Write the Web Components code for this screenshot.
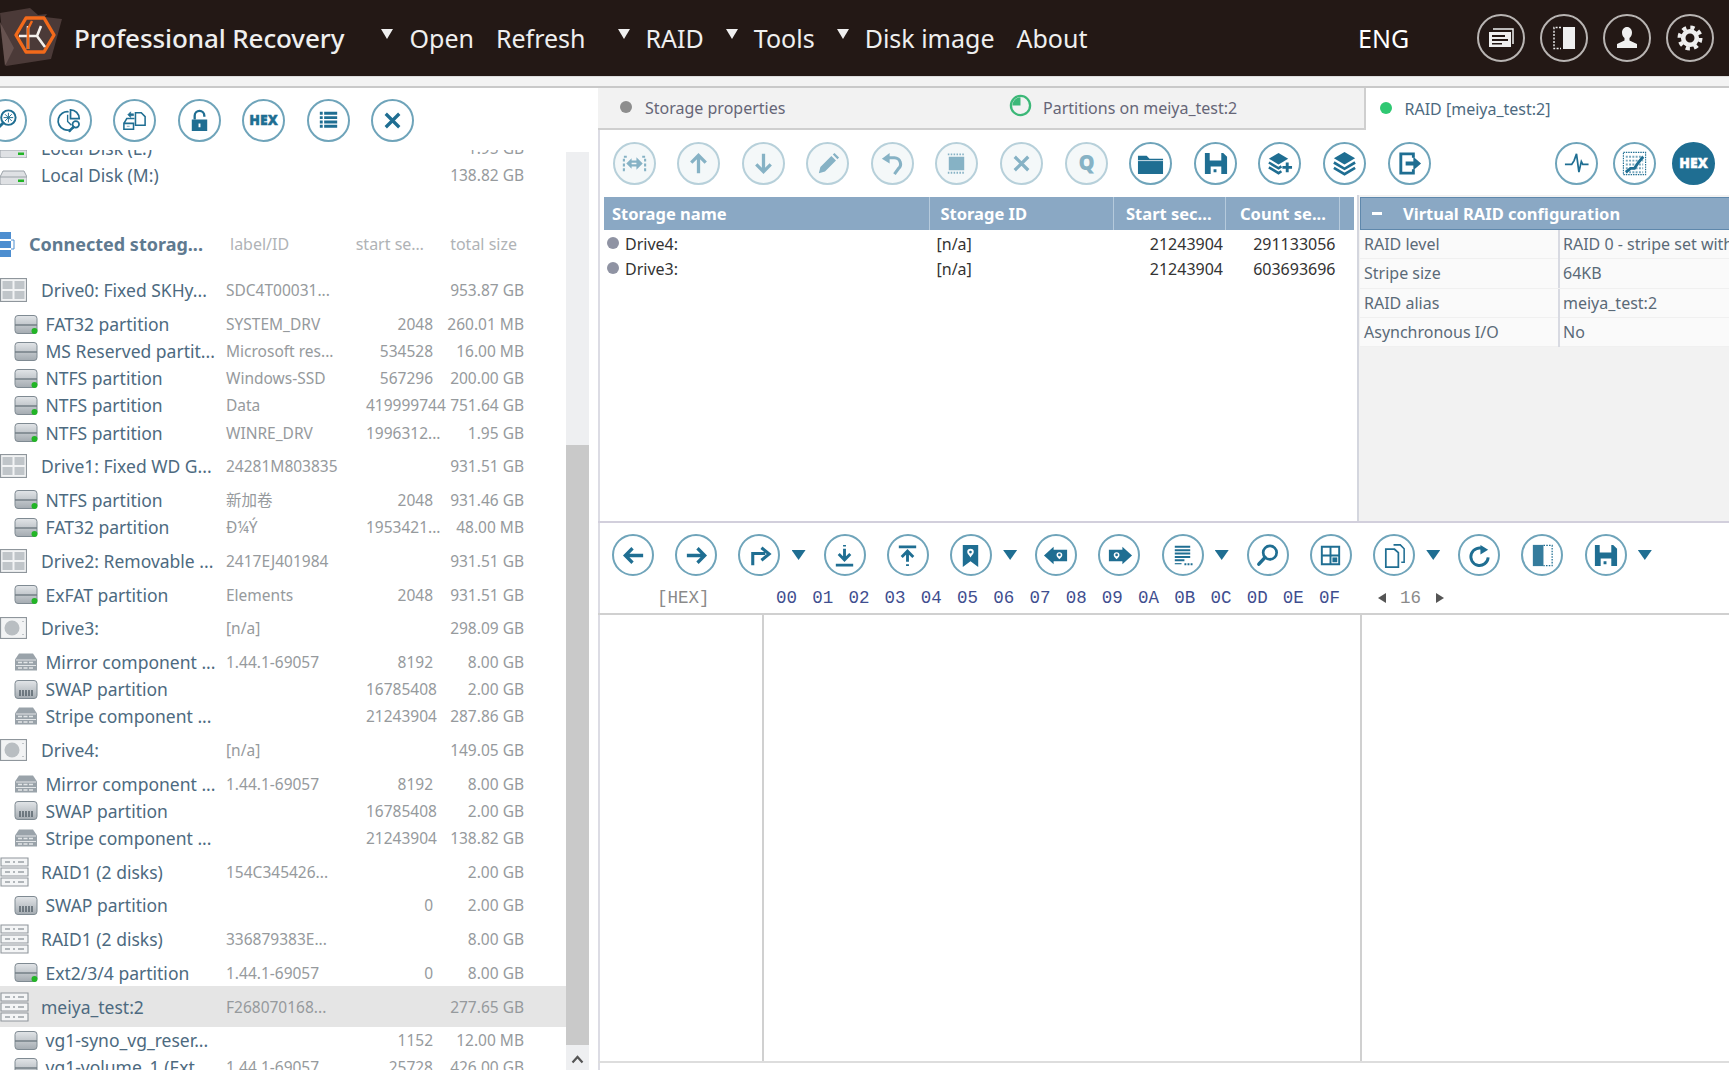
<!DOCTYPE html>
<html>
<head>
<meta charset="utf-8">
<title>Professional Recovery</title>
<style>
    html, body { margin: 0; padding: 0; }
    body {
        width: 1729px;
        height: 1070px;
        overflow: hidden;
        background: #fff;
        font-family: "Noto Sans", "Noto Sans CJK SC", sans-serif;
    }
</style>
</head>
<body>
<app-shell>
    <app-header slot="header">
        <nav-item caret>Open</nav-item>
        <nav-item>Refresh</nav-item>
        <nav-item caret>RAID</nav-item>
        <nav-item caret>Tools</nav-item>
        <nav-item caret>Disk image</nav-item>
        <nav-item>About</nav-item>
    </app-header>

    <tree-panel slot="left">
        <round-btn slot="tools" icon="scan"></round-btn>
        <round-btn slot="tools" icon="piesearch"></round-btn>
        <round-btn slot="tools" icon="diskfile"></round-btn>
        <round-btn slot="tools" icon="lock"></round-btn>
        <round-btn slot="tools" icon="hex"></round-btn>
        <round-btn slot="tools" icon="list"></round-btn>
        <round-btn slot="tools" icon="x"></round-btn>

        <tree-row compact icon="local" start="" size="1.95 GB" style="margin-top:-15.5px">Local Disk (L:)</tree-row>
        <tree-row compact icon="local" size="138.82 GB" style="margin-bottom:35.5px">Local Disk (M:)</tree-row>
        <tree-head style="margin-bottom:6px">Connected storag...</tree-head>

        <tree-row icon="drive" tag="SDC4T00031..." size="953.87 GB">Drive0: Fixed SKHy...</tree-row>
        <tree-row child icon="part" tag="SYSTEM_DRV" start="2048" size="260.01 MB">FAT32 partition</tree-row>
        <tree-row child icon="plain" tag="Microsoft res..." start="534528" size="16.00 MB">MS Reserved partit...</tree-row>
        <tree-row child icon="part" tag="Windows-SSD" start="567296" size="200.00 GB">NTFS partition</tree-row>
        <tree-row child icon="part" tag="Data" start="419999744" size="751.64 GB">NTFS partition</tree-row>
        <tree-row child icon="part" tag="WINRE_DRV" start="1996312..." size="1.95 GB">NTFS partition</tree-row>
        <tree-row icon="drive" tag="24281M803835" size="931.51 GB">Drive1: Fixed WD G...</tree-row>
        <tree-row child icon="part" tag="新加卷" start="2048" size="931.46 GB">NTFS partition</tree-row>
        <tree-row child icon="part" tag="Ð¼Ý" start="1953421..." size="48.00 MB">FAT32 partition</tree-row>
        <tree-row icon="drive" tag="2417EJ401984" size="931.51 GB">Drive2: Removable ...</tree-row>
        <tree-row child icon="part" tag="Elements" start="2048" size="931.51 GB">ExFAT partition</tree-row>
        <tree-row icon="hdd" tag="[n/a]" size="298.09 GB">Drive3:</tree-row>
        <tree-row child icon="comp" tag="1.44.1-69057" start="8192" size="8.00 GB">Mirror component ...</tree-row>
        <tree-row child icon="swap" start="16785408" size="2.00 GB">SWAP partition</tree-row>
        <tree-row child icon="comp" start="21243904" size="287.86 GB">Stripe component ...</tree-row>
        <tree-row icon="hdd" tag="[n/a]" size="149.05 GB">Drive4:</tree-row>
        <tree-row child icon="comp" tag="1.44.1-69057" start="8192" size="8.00 GB">Mirror component ...</tree-row>
        <tree-row child icon="swap" start="16785408" size="2.00 GB">SWAP partition</tree-row>
        <tree-row child icon="comp" start="21243904" size="138.82 GB">Stripe component ...</tree-row>
        <tree-row icon="raid" tag="154C345426..." size="2.00 GB">RAID1 (2 disks)</tree-row>
        <tree-row child icon="swap" start="0" size="2.00 GB">SWAP partition</tree-row>
        <tree-row icon="raid" tag="336879383E..." size="8.00 GB">RAID1 (2 disks)</tree-row>
        <tree-row child icon="part" tag="1.44.1-69057" start="0" size="8.00 GB">Ext2/3/4 partition</tree-row>
        <tree-row selected icon="raid" tag="F268070168..." size="277.65 GB">meiya_test:2</tree-row>
        <tree-row child icon="plain" start="1152" size="12.00 MB">vg1-syno_vg_reser...</tree-row>
        <tree-row child icon="part" tag="1.44.1-69057" start="25728" size="426.00 GB">vg1-volume_1 (Ext...</tree-row>
    </tree-panel>

    <main-panel slot="right">
        <tab-strip slot="tabs"></tab-strip>
        <round-btn slot="tools-a" kind="off" icon="dashed"></round-btn>
        <round-btn slot="tools-a" kind="off" icon="up"></round-btn>
        <round-btn slot="tools-a" kind="off" icon="down"></round-btn>
        <round-btn slot="tools-a" kind="off" icon="pencil"></round-btn>
        <round-btn slot="tools-a" kind="off" icon="undo"></round-btn>
        <round-btn slot="tools-a" kind="off" icon="chip"></round-btn>
        <round-btn slot="tools-a" kind="off" icon="x"></round-btn>
        <round-btn slot="tools-a" kind="off" icon="q"></round-btn>
        <round-btn slot="tools-a" icon="folder"></round-btn>
        <round-btn slot="tools-a" icon="save"></round-btn>
        <round-btn slot="tools-a" icon="layersplus"></round-btn>
        <round-btn slot="tools-a" icon="layers"></round-btn>
        <round-btn slot="tools-a" icon="export"></round-btn>
        <round-btn slot="tools-b" icon="pulse"></round-btn>
        <round-btn slot="tools-b" icon="heat"></round-btn>
        <round-btn slot="tools-b" kind="on" icon="hex"></round-btn>
        <round-btn slot="tools-b" icon="table"></round-btn>

        <raid-table slot="table"></raid-table>
        <prop-panel slot="props"></prop-panel>

        <hex-view slot="hex"></hex-view>
    </main-panel>
</app-shell>

<script>
    // all icons drawn on a 28x28 box, currentColor
    const ICONS = {
        scan: '<circle cx="17" cy="11" r="7.5" fill="none" stroke="currentColor" stroke-width="2"/><path d="M11.5 16.5L4 24" stroke="currentColor" stroke-width="3" stroke-linecap="round"/><path d="M17 6v10M12 11h10M13.5 7.5l7 7M20.5 7.5l-7 7" stroke="currentColor" stroke-width="1"/>',
        piesearch: '<path d="M12 5a9.5 9.5 0 1 0 7 14" fill="none" stroke="currentColor" stroke-width="1.8"/><path d="M14 3a9 9 0 0 1 9 9h-9z" fill="none" stroke="currentColor" stroke-width="1.8"/><path d="M11 8v7l4 4" fill="none" stroke="currentColor" stroke-width="1.4"/><circle cx="19.5" cy="18" r="3.4" fill="#fff" stroke="currentColor" stroke-width="1.8"/><path d="M17 20.5L13 25" stroke="currentColor" stroke-width="2.4" stroke-linecap="round"/>',
        diskfile: '<path d="M15 6h6l4 4v9H15z" fill="none" stroke="currentColor" stroke-width="1.6"/><path d="M3 17h10v6H3zM3 17l3-5h8" fill="none" stroke="currentColor" stroke-width="1.6"/><path d="M7 8l3-3v2h3v2h-3v2zM6 20h3" fill="currentColor" stroke="currentColor" stroke-width=".6"/>',
        lock: '<path d="M9 13V9a5 5 0 0 1 10 0v1" fill="none" stroke="currentColor" stroke-width="2.4"/><path fill-rule="evenodd" d="M6 13h16v12H6zM13 17v4h2v-4z" fill="currentColor"/>',
        hex: '<text x="14" y="19" text-anchor="middle" font-family="Noto Sans, sans-serif" font-weight="900" font-size="14.5" fill="currentColor" stroke="currentColor" stroke-width=".4">HEX</text>',
        list: '<path d="M5 6.5h3M5 11h3M5 15.5h3M5 20h3" stroke="currentColor" stroke-width="3"/><path d="M9.5 6.5H23M9.5 11H23M9.5 15.5H23M9.5 20H23" stroke="currentColor" stroke-width="3"/>',
        x: '<path d="M7 7l14 14M21 7L7 21" stroke="currentColor" stroke-width="3.4" fill="none"/>',
        dashed: '<path d="M6 7H3v14h3M22 7h3v14h-3" fill="none" stroke="currentColor" stroke-width="2.2" stroke-dasharray="3 2"/><path d="M10 12h8M10 16h8" stroke="currentColor" stroke-width="2.2"/><path d="M16 7.5l6.5 6.5-6.5 6.5zM11 8.5L5.5 14l5.5 5.5z" fill="currentColor"/>',
        up: '<path d="M14 24V6M6.5 13L14 5.5l7.5 7.5" fill="none" stroke="currentColor" stroke-width="3.4"/>',
        down: '<path d="M14 4v18M6.5 15l7.5 7.5 7.5-7.5" fill="none" stroke="currentColor" stroke-width="3.4"/>',
        pencil: '<path d="M5 24l1.6-6.4L18 6.2l4.8 4.8L11.4 22.4zM19.5 4.7l1.7-1.7 4.8 4.8-1.7 1.7z" fill="currentColor"/>',
        undo: '<path d="M10 8h6a6.5 6.5 0 0 1 4 11.5L16 25" fill="none" stroke="currentColor" stroke-width="3.2"/><path d="M3 9l8-6v11z" fill="currentColor"/>',
        chip: '<rect x="6" y="7" width="16" height="14" fill="currentColor"/><path d="M5 4.5h18M5 23.5h18" stroke="currentColor" stroke-width="2" stroke-dasharray="1.6 1.4"/>',
        q: '<text x="14" y="21" text-anchor="middle" font-family="Noto Sans, sans-serif" font-weight="900" font-size="21" fill="currentColor">Q</text>',
        folder: '<path d="M1 6h9l3 3h14v16H1z" fill="currentColor"/><path d="M1 11h26" stroke="#fff" stroke-width=".8"/>',
        save: '<path fill-rule="evenodd" d="M3 3h19l4 4v18H3zM8 3v8h12V3zM9 17v8h11v-8zM12 20h3v3h-3z" fill="currentColor"/>',
        layersplus: '<path d="M13 3l10 6-10 6-10-6z" fill="currentColor"/><path d="M3 13l10 6 3-2M3 18l10 6 3-2" fill="none" stroke="currentColor" stroke-width="2.6"/><path d="M22 13v10M17 18h10" stroke="currentColor" stroke-width="3"/>',
        layers: '<path d="M14 2l11 6.5L14 15 3 8.5z" fill="currentColor"/><path d="M3 13l11 6.5L25 13M3 18.5L14 25l11-6.5" fill="none" stroke="currentColor" stroke-width="2.8"/>',
        export: '<path d="M18 8V4H5v20h13v-4" fill="none" stroke="currentColor" stroke-width="3"/><path d="M10 12h8V7l8 7-8 7v-5h-8z" fill="currentColor"/>',
        pulse: '<path d="M2 15h7l2.5-4 2.5-7 2.5 19 2.5-11 1.5 3h6" fill="none" stroke="currentColor" stroke-width="1.8"/>',
        heat: '<rect x="2.5" y="2.5" width="23" height="23" fill="none" stroke="currentColor" stroke-width="1.2" stroke-dasharray="1.5 1"/><path d="M5 7h18M5 11h18M5 15h18M5 19h18M5 23h18" stroke="currentColor" stroke-width="2" stroke-dasharray="2 1.4" opacity=".6"/><path d="M5 23l5-4 4 0 4-6 5-6" stroke="currentColor" stroke-width="3" fill="none"/>',
        table: '<rect x="4" y="3" width="20" height="22" fill="none" stroke="currentColor" stroke-width="2"/><path d="M4 11h20M14 3v8" stroke="currentColor" stroke-width="2"/><path d="M7 15h14v7H7z" fill="currentColor"/>',
        back: '<path d="M24 14H6M13 6.5L5.5 14l7.5 7.5" fill="none" stroke="currentColor" stroke-width="3.4"/>',
        forward: '<path d="M4 14h18M15 6.5l7.5 7.5-7.5 7.5" fill="none" stroke="currentColor" stroke-width="3.4"/>',
        jump: '<path d="M7 24V12h13" fill="none" stroke="currentColor" stroke-width="3.2"/><path d="M16 6l8 6.5-8 6.5" fill="none" stroke="currentColor" stroke-width="3.2"/>',
        godown: '<path d="M14 3v1.6M14 7v11M8 12.5l6 6 6-6M5 24h18" fill="none" stroke="currentColor" stroke-width="3"/>',
        goup: '<path d="M5 5h18M14 10v10.5M8 15.5l6-6 6 6M14 23v2" fill="none" stroke="currentColor" stroke-width="3"/>',
        mark: '<path fill-rule="evenodd" d="M6 3h16v23l-8-6-8 6zM14 7a3.4 3.4 0 0 0-3.4 3.4c0 2 1.9 3.2 3.4 5.6 1.500-2.400 3.400-3.600 3.400-5.600A3.400 3.400 0 0 0 14 7zM14 9a1.400 1.400 0 1 1 0 2.800A1.400 1.400 0 0 1 14 9z" fill="currentColor"/>',
        markprev: '<path fill-rule="evenodd" d="M1 14l10-9v3h14v12H11v3zM17 10.500a3 3 0 0 0-3 3c0 1.700 1.700 2.700 3 4.500 1.300-1.800 3-2.800 3-4.500a3 3 0 0 0-3-3zM17 12a1.400 1.400 0 1 1 0 2.800A1.400 1.400 0 0 1 17 12z" fill="currentColor"/>',
        marknext: '<path fill-rule="evenodd" d="M27 14l-10-9v3H3v12h14v3zM11 10.500a3 3 0 0 0-3 3c0 1.700 1.700 2.700 3 4.500 1.300-1.800 3-2.800 3-4.500a3 3 0 0 0-3-3zM11 12a1.400 1.400 0 1 1 0 2.800A1.400 1.400 0 0 1 11 12z" fill="currentColor"/>',
        listdots: '<path d="M6 5h16M6 8.500h16M6 12h16M6 15.500h16M6 19h10" stroke="currentColor" stroke-width="2.100"/><path d="M16 23h9" stroke="currentColor" stroke-width="2" stroke-dasharray="2 1.200"/><path d="M6 22.500h7" stroke="currentColor" stroke-width="1.200"/>',
        search: '<circle cx="16.500" cy="11" r="7" fill="none" stroke="currentColor" stroke-width="2.800"/><path d="M11.500 16L5 23" stroke="currentColor" stroke-width="3.600" stroke-linecap="round"/>',
        grid: '<path d="M5 5h18v18H5zM14 5v18M5 14h18" fill="none" stroke="currentColor" stroke-width="2"/><rect x="16" y="16" width="5" height="5" fill="currentColor"/>',
        copy: '<path d="M13 3h7l4 4v14h-3" fill="none" stroke="currentColor" stroke-width="1.600"/><path d="M5 7.500h9l4 3.500v15H5z" fill="none" stroke="currentColor" stroke-width="1.800"/>',
        redo: '<path d="M18.500 7.500A9 9 0 1 0 23 16" fill="none" stroke="currentColor" stroke-width="3"/><path d="M15 3l8 5-8 5z" fill="currentColor"/>',
        half: '<rect x="4" y="3" width="11" height="22" fill="currentColor" opacity=".9"/><path d="M15 3.500h9v21h-9" fill="none" stroke="currentColor" stroke-width="1.300" stroke-dasharray="1.600 1.300"/>',
        cards: '<path d="M6 5h20v15" fill="none" stroke="currentColor" stroke-width="1.500"/><path fill-rule="evenodd" d="M2 8h22v15H2zM5 11v2h13v-2zM5 15v2h16v-2zM5 19v1.500h10V19z" fill="currentColor"/>',
        panel: '<rect x="13" y="3" width="12" height="22" fill="currentColor"/><path d="M11 3.500H4v21h7" fill="none" stroke="currentColor" stroke-width="1.400" stroke-dasharray="2 1.400"/>',
        user: '<path d="M14 3c-3 0-5 2.500-5 5.500 0 2.500 1 4.500 2.500 5.500v2.500L4 20v4h20v-4l-7.500-3.500V14c1.500-1 2.500-3 2.500-5.500C19 5.500 17 3 14 3z" fill="currentColor"/>',
        gear: '<circle cx="14" cy="14" r="6.800" fill="none" stroke="currentColor" stroke-width="4.600"/><circle cx="14" cy="14" r="10.500" fill="none" stroke="currentColor" stroke-width="4" stroke-dasharray="4.200 4.050"/>'
    };

    // little drive pictures of the tree, by kind
    const GREY_DEFS = '<defs><linearGradient id="g" x1="0" y1="0" x2="0" y2="1"><stop offset="0" stop-color="#e2e5e8"/><stop offset="1" stop-color="#a4abb1"/></linearGradient></defs>';
    const LED = '<circle cx="20.500" cy="17" r="3" fill="#22b526"/>';
    const TREE_ICONS = {
        local: GREY_DEFS + '<path d="M3 6h21l3 6v6a2 2 0 0 1-2 2H2a2 2 0 0 1-2-2v-6z" fill="#dfe1e4" stroke="#9ba2a8"/><path d="M0 12h27" stroke="#9ba2a8"/><rect x="18" y="14.500" width="6" height="2.500" fill="#22b526"/>',
        part: GREY_DEFS + '<path d="M4 1.500h16a3 3 0 0 1 3 3v12a3 3 0 0 1-3 3H4a3 3 0 0 1-3-3v-12a3 3 0 0 1 3-3z" fill="url(#g)" stroke="#7f8a92"/><path d="M1 11h22" stroke="#6f7a82" stroke-width="1.400"/>' + LED,
        plain: GREY_DEFS + '<path d="M4 1.500h16a3 3 0 0 1 3 3v12a3 3 0 0 1-3 3H4a3 3 0 0 1-3-3v-12a3 3 0 0 1 3-3z" fill="url(#g)" stroke="#7f8a92"/><path d="M1 11h22" stroke="#6f7a82" stroke-width="1.400"/>',
        swap: GREY_DEFS + '<path d="M4 1.500h16a3 3 0 0 1 3 3v12a3 3 0 0 1-3 3H4a3 3 0 0 1-3-3v-12a3 3 0 0 1 3-3z" fill="url(#g)" stroke="#7f8a92"/><path d="M6 11v6M9 11v6M12 11v6M15 11v6M18 11v6" stroke="#5d6870" stroke-width="1.600"/>',
        comp: '<path d="M5 1.500h14l4 6v11H1v-11z" fill="#9aa3aa"/><path d="M2 8h20M2 13.500h20" stroke="#e3e6e8" stroke-width="1.200"/><path d="M4 10.500h16M4 16h16" stroke="#e3e6e8" stroke-width="1.400" stroke-dasharray="4 1.500"/>',
        drive: '<rect x=".5" y=".5" width="26" height="23" fill="#f2f3f4" stroke="#8f969c" stroke-width="1.200"/><rect x="2.500" y="3" width="10" height="8" fill="#c0c5c9"/><rect x="14.500" y="3" width="10" height="8" fill="#c0c5c9"/><rect x="2.500" y="13" width="10" height="8" fill="#c0c5c9"/><rect x="14.500" y="13" width="10" height="8" fill="#c0c5c9"/>',
        hdd: '<rect x=".5" y=".5" width="26" height="21" fill="#f2f3f4" stroke="#8f969c" stroke-width="1.200"/><circle cx="12" cy="11" r="7.500" fill="#b9bec2"/><path d="M23 4v1M23 17v1" stroke="#8f969c"/>',
        raid: '<path d="M1 1h27v8H1zM1 11h27v8H1zM1 21h27v8H1z" fill="#f4f5f6" stroke="#8f969c" stroke-width="1.100"/><path d="M5 5h5M13 5h2M18 5h6M5 15h5M13 15h2M18 15h6M5 25h5M13 25h2M18 25h6" stroke="#9aa1a7" stroke-width="1.600"/>'
    };
    const TREE_BOX = { local: [27, 20], part: [25, 21], plain: [25, 21], swap: [25, 21], comp: [24, 20], drive: [27, 24], hdd: [27, 22], raid: [29, 30] };

    class AppShell extends HTMLElement {
        constructor() {
            super();
            this.attachShadow({ mode: "open" }).innerHTML = `
                <style>
                    :host { display: grid; grid-template-rows: 76px 12px 1fr; width: 1729px; height: 1070px; overflow: hidden; }
                    .strip { background: #f3f3f3; border-top: 1px solid #ddd; border-bottom: 2px solid #c9c9c9; box-sizing: border-box; }
                    .body { display: grid; grid-template-columns: 598px 1fr; min-height: 0; }
                </style>
                <slot name="header"></slot>
                <div class="strip"></div>
                <div class="body">
                    <slot name="left"></slot>
                    <slot name="right"></slot>
                </div>
            `;
        }
    }

    class AppHeader extends HTMLElement {
        constructor() {
            super();
            this.attachShadow({ mode: "open" }).innerHTML = `
                <style>
                    :host { display: flex; align-items: center; height: 76px; background: #231815; color: #efefef; overflow: hidden; }
                    .logo { flex: none; width: 62px; height: 76px; margin-right: 12px; }
                    .title { width: 318px; font-size: 26px; font-weight: 500; letter-spacing: -.1px; white-space: nowrap; }
                    nav { display: flex; width: 1010px; align-items: center; gap: 0; }
                    .lang { font-size: 25px; width: 123px; white-space: nowrap; color: #fff; }
                    .ic { flex: none; box-sizing: border-box; width: 48px; height: 48px; margin-right: 15px; border: 2px solid #b8b4b2; border-radius: 50%; display: flex; align-items: center; justify-content: center; color: #efefef; }
                    svg.i { width: 28px; height: 28px; }
                </style>
                <svg class="logo" viewBox="0 0 62 76">
                    <path d="M0 13L30 8l8 7 9-1-2 3 17 2-11 40L6 66z" fill="#4b3a38"/>
                    <path d="M0 22l5 44 9-18z" fill="#66524f"/>
                    <path d="M26 18h18l10 17-10 17H26L16 35z" fill="none" stroke="#f26a1b" stroke-width="3.400" stroke-linejoin="round"/>
                    <path d="M19 36h11M41 26l-4 10 8 11M28 26v23M28 36h8" fill="none" stroke="#f4f0ec" stroke-width="2.600"/>
                    <path d="M32 21l-4 8v20" fill="none" stroke="#f26a1b" stroke-width="2.400"/>
                </svg>
                <div class="title">Professional Recovery</div>
                <nav><slot></slot></nav>
                <div class="lang">ENG</div>
                <div class="ic"><svg class="i" viewBox="0 0 28 28">${ICONS.cards}</svg></div>
                <div class="ic"><svg class="i" viewBox="0 0 28 28">${ICONS.panel}</svg></div>
                <div class="ic"><svg class="i" viewBox="0 0 28 28">${ICONS.user}</svg></div>
                <div class="ic"><svg class="i" viewBox="0 0 28 28">${ICONS.gear}</svg></div>
            `;
        }
    }

    class NavItem extends HTMLElement {
        constructor() {
            super();
            const caret = this.hasAttribute("caret");
            this.attachShadow({ mode: "open" }).innerHTML = `
                <style>
                    :host { display: flex; align-items: center; font-size: 25px; white-space: nowrap; margin-right: 32px; }
                    :host([caret]) { margin-right: 22px; }
                    i { width: 0; height: 0; margin: -8px 16px 0 0; border: 6px solid transparent; border-top: 10px solid #efefef; border-bottom: 0; }
                </style>
                ${caret ? "<i></i>" : ""}<slot></slot>
            `;
        }
    }

    class RoundBtn extends HTMLElement {
        constructor() {
            super();
            this.attachShadow({ mode: "open" }).innerHTML = `
                <style>
                    :host { display: flex; flex: none; box-sizing: border-box; width: var(--btn, 43px); height: var(--btn, 43px); border: 2px solid #6fa4ba; border-radius: 50%; align-items: center; justify-content: center; color: #1f6e92; background: #fff; }
                    :host([kind="off"]) { border-color: #b7d0da; color: #86b2c5; background: #f4f8f9; }
                    :host([kind="on"]) { background: #1f6e92; border-color: #1f6e92; color: #fff; }
                    svg { width: 27px; height: 27px; overflow: visible; }
                </style>
                <svg viewBox="0 0 28 28">${ICONS[this.getAttribute("icon")] || ""}</svg>
            `;
        }
    }

    class TreePanel extends HTMLElement {
        constructor() {
            super();
            this.attachShadow({ mode: "open" }).innerHTML = `
                <style>
                    :host { display: grid; grid-template-rows: 62px 1fr; grid-template-columns: 566px 23px 9px; height: 982px; overflow: hidden; border-right: 2px solid #dcdce4; box-sizing: border-box; width: 600px; }
                    .tools { grid-column: 1 / -1; display: flex; align-items: center; gap: 21.5px; margin-left: -16px; padding-top: 2px; }
                    .list { overflow: hidden; min-height: 0; }
                    .bar { display: flex; flex-direction: column; background: #eeeff1; margin-top: 2px; }
                    .gap { height: 293px; flex: none; }
                    .thumb { height: 600px; flex: none; background: #c9c9c9; }
                    .arrow { flex: 1; display: flex; justify-content: center; padding-top: 9px; }
                    .arrow svg { width: 13px; height: 10px; }
                </style>
                <div class="tools"><slot name="tools"></slot></div>
                <div class="list"><slot></slot></div>
                <div class="bar">
                    <div class="gap"></div><div class="thumb"></div>
                    <div class="arrow"><svg viewBox="0 0 13 10"><path d="M1.500 8.500L6.500 3l5 5.500" fill="none" stroke="#555" stroke-width="2.200"/></svg></div>
                </div>
            `;
        }
    }

    const TREE_COLS = "226px 140px 67px 91px";

    class TreeHead extends HTMLElement {
        constructor() {
            super();
            this.attachShadow({ mode: "open" }).innerHTML = `
                <style>
                    :host { display: grid; grid-template-columns: ${TREE_COLS}; align-items: center; height: 40px; color: #b0b3b6; font-size: 16px; white-space: nowrap; }
                    .name { display: flex; align-items: center; font-size: 18px; font-weight: 700; color: #5f7a90; }
                    svg { width: 15px; height: 26px; margin-right: 14px; flex: none; }
                    .id { padding-left: 4px; }
                    .st { padding-left: 0; grid-column: 3; text-align: right; margin-left: -30px; margin-right: 9px; }
                    .sz { text-align: right; padding-right: 7px; }
                </style>
                <div class="name">
                    <svg viewBox="0 0 15 26"><path d="M0 1h11v7H0zM0 10h11v7H0zM0 19h11v7H0z" fill="#4d8ed0"/><path d="M11 9h3v9h-3" fill="none" stroke="#4d8ed0"/></svg>
                    <slot></slot>
                </div>
                <div class="id">label/ID</div>
                <div class="st">start se…</div>
                <div class="sz">total size</div>
            `;
        }
    }

    class TreeRow extends HTMLElement {
        constructor() {
            super();
            const kind = this.getAttribute("icon");
            const box = TREE_BOX[kind];
            this.attachShadow({ mode: "open" }).innerHTML = `
                <style>
                    :host { display: grid; grid-template-columns: ${TREE_COLS}; align-items: center; height: 40.400px; font-size: 15.500px; color: #969a9d; white-space: nowrap; }
                    :host([child]), :host([compact]) { height: 27.100px; }
                    :host([selected]) { background: #e5e5e5; }
                    .name { display: flex; align-items: center; font-size: 17.500px; color: #4d6a80; overflow: visible; }
                    .ico { flex: none; display: flex; width: 41px; }
                    :host([child]) .name { padding-left: 14px; }
                    :host([child]) .ico { width: 31.500px; }
                    .start, .size { text-align: right; }
                </style>
                <div class="name">
                    <span class="ico"><svg width="${box[0]}" height="${box[1]}" viewBox="0 0 ${box[0]} ${box[1]}">${TREE_ICONS[kind]}</svg></span>
                    <slot></slot>
                </div>
                <div>${this.getAttribute("tag") || ""}</div>
                <div class="start">${this.getAttribute("start") || ""}</div>
                <div class="size">${this.getAttribute("size") || ""}</div>
            `;
        }
    }

    class MainPanel extends HTMLElement {
        constructor() {
            super();
            this.attachShadow({ mode: "open" }).innerHTML = `
                <style>
                    :host { display: grid; grid-template-rows: 42px 67px 326px 1fr; height: 982px; min-width: 0; overflow: hidden; }
                    .tools { display: flex; align-items: center; padding-left: 14.500px; gap: 21.600px; }
                    .tools-b { display: flex; gap: 15.500px; margin-left: 102.500px; }
                    .upper { display: grid; grid-template-columns: 759px 1fr; padding-left: 0; border-bottom: 2px solid #d2cfdc; box-sizing: border-box; }
                </style>
                <slot name="tabs"></slot>
                <div class="tools"><slot name="tools-a"></slot><div class="tools-b"><slot name="tools-b"></slot></div></div>
                <div class="upper"><slot name="table"></slot><slot name="props"></slot></div>
                <slot name="hex"></slot>
            `;
        }
    }

    class TabStrip extends HTMLElement {
        constructor() {
            super();
            this.attachShadow({ mode: "open" }).innerHTML = `
                <style>
                    :host { display: grid; grid-template-columns: 364px 402.500px 1fr; font-size: 16px; color: #667; white-space: nowrap; }
                    .tab { display: flex; align-items: center; background: #f2f2f2; border-bottom: 2px solid #cfcfcf; box-sizing: border-box; padding-bottom: 1px; }
                    .active { background: #fff; border-bottom: 0; border-left: 2px solid #cfcfcf; color: #4d6a80; padding-left: 14px; margin-left: -1px; position: relative; }
                    .dot { width: 12px; height: 12px; border-radius: 50%; background: #8d8d8d; margin: -2px 13px 0 22px; flex: none; }
                    .active .dot { background: #2fc872; margin: -2px 13px 0 0; }
                    .part { width: 23px; height: 23px; flex: none; margin: -4px 11px 0 47px; }
                    .close { position: absolute; right: 0; top: 13px; width: 15px; height: 15px; }
                </style>
                <div class="tab"><i class="dot"></i>Storage properties</div>
                <div class="tab">
                    <svg class="part" viewBox="0 0 24 24"><circle cx="12" cy="12" r="10" fill="none" stroke="#3cb878" stroke-width="2.400"/><path d="M12 3.500v8.500h8.500A8.500 8.500 0 0 0 12 3.500z" fill="#3cb878" transform="rotate(-90 12 12)"/></svg>
                    Partitions on meiya_test:2
                </div>
                <div class="tab active"><i class="dot"></i>RAID [meiya_test:2]
                    <svg class="close" viewBox="0 0 15 15"><path d="M1 1l13 13M14 1L1 14" stroke="#777" stroke-width="2.200"/></svg>
                </div>
            `;
        }
    }

    class RaidTable extends HTMLElement {
        constructor() {
            super();
            this.attachShadow({ mode: "open" }).innerHTML = `
                <style>
                    :host { display: block; padding-left: 6px; font-size: 16px; color: #333; white-space: nowrap; }
                    .row { display: grid; grid-template-columns: 325.500px 184.500px 112px 113.500px 14px; width: 749.500px; }
                    .head { height: 33px; align-items: center; background: #8aa8c4; color: #fff; font-weight: 700; font-size: 16.500px; }
                    .head div { height: 33px; line-height: 33px; padding-left: 8px; box-sizing: border-box; border-right: 1px solid #b5cadc; }
                    .head div:nth-child(2) { padding-left: 11px; }
                    .head div:nth-child(3) { padding-left: 12px; }
                    .head div:nth-child(4) { padding-left: 14px; }
                    .head div:last-child { border: 0; }
                    .cell-row { height: 25px; line-height: 25px; }
                    .cell-row:first-of-type { margin-top: 1px; }
                    .first { margin-top: 2px; }
                    .name { display: flex; align-items: center; }
                    .dot { width: 12px; height: 12px; border-radius: 50%; background: #8f93a3; margin: -3px 6px 0 3px; }
                    .idc { padding-left: 7px; }
                    .num { text-align: right; padding-right: 3px; }
                    .num2 { text-align: right; padding-right: 4px; }
                </style>
                <div class="row head"><div>Storage name</div><div>Storage ID</div><div>Start sec...</div><div>Count se...</div><div></div></div>
                <div class="row cell-row first"><div class="name"><i class="dot"></i>Drive4:</div><div class="idc">[n/a]</div><div class="num">21243904</div><div class="num2">291133056</div></div>
                <div class="row cell-row"><div class="name"><i class="dot"></i>Drive3:</div><div class="idc">[n/a]</div><div class="num">21243904</div><div class="num2">603693696</div></div>
            `;
        }
    }

    class PropPanel extends HTMLElement {
        constructor() {
            super();
            const rows = [["RAID level", "RAID 0 - stripe set with"], ["Stripe size", "64KB"], ["RAID alias", "meiya_test:2"], ["Asynchronous I/O", "No"]];
            this.attachShadow({ mode: "open" }).innerHTML = `
                <style>
                    :host { display: block; background: #f2f2f2; border-left: 2px solid #d4d6de; padding-left: 1px; margin-top: -2px; padding-top: 2px; font-size: 16px; color: #5a6a78; white-space: nowrap; overflow: hidden; }
                    .head { height: 33px; box-sizing: border-box; display: flex; align-items: center; background: #8aa8c4; border: 1px solid #5f88ac; border-right: 0; color: #fff; font-weight: 700; font-size: 16.500px; }
                    .minus { width: 10px; height: 3px; background: #fff; margin: 0 21px 0 11px; }
                    .row { display: grid; grid-template-columns: 200px 1fr; height: 29.300px; line-height: 29px; background: #fafafa; border-bottom: 1px solid #f0f0f0; box-sizing: border-box; }
                    .row div:first-child { padding-left: 4px; border-right: 2px solid #d8dae2; }
                    .row div:last-child { padding-left: 3px; }
                </style>
                <div class="head"><i class="minus"></i>Virtual RAID configuration</div>
                ${rows.map(r => `<div class="row"><div>${r[0]}</div><div>${r[1]}</div></div>`).join("")}
            `;
        }
    }

    class HexView extends HTMLElement {
        constructor() {
            super();
            const cols = ["00","01","02","03","04","05","06","07","08","09","0A","0B","0C","0D","0E","0F"];
            const b = (name) => `<round-btn icon="${name}"></round-btn>`;
            const caret = '<i class="caret"></i>';
            this.attachShadow({ mode: "open" }).innerHTML = `
                <style>
                    :host { display: grid; grid-template-rows: 60px 32px 1fr; min-height: 0; height: 547px; box-sizing: border-box; --btn: 42px; padding-bottom: 7px; }
                    .tools { display: flex; align-items: center; padding: 4px 0 0 14px; }
                    round-btn { margin-right: 21.200px; }
                    .caret { flex: none; width: 14px; height: 10px; margin: 0 18px 0 -10px; background: #1f6e92; clip-path: polygon(0 0, 100% 0, 50% 100%); }
                    .head { display: flex; align-items: center; border-bottom: 2px solid #d0d0d0; font-family: "Liberation Mono", monospace; font-size: 17.500px; color: #8a8a8a; white-space: nowrap; }
                    .label { width: 178px; padding-left: 59px; box-sizing: border-box; }
                    .cols { display: flex; gap: 15.200px; color: #3f4e8f; width: 594px; }
                    .nav { display: flex; align-items: center; margin-left: 8px; }
                    .nav i { width: 0; height: 0; border: 5px solid transparent; }
                    .nav .l { border-right: 8px solid #555; border-left: 0; margin-right: 14px; }
                    .nav .r { border-left: 8px solid #555; border-right: 0; margin-left: 15px; }
                    .body { display: grid; grid-template-columns: 164px 598px 1fr; border-bottom: 2px solid #ddd; }
                    .body div + div { border-left: 2px solid #d0d0d0; }
                </style>
                <div class="tools">
                    ${b("back")}${b("forward")}${b("jump")}${caret}${b("godown")}${b("goup")}${b("mark")}${caret}${b("markprev")}${b("marknext")}${b("listdots")}${caret}${b("search")}${b("grid")}${b("copy")}${caret}${b("redo")}${b("half")}${b("save")}${caret}
                </div>
                <div class="head">
                    <div class="label">[HEX]</div>
                    <div class="cols">${cols.map(c => `<span>${c}</span>`).join("")}</div>
                    <div class="nav"><i class="l"></i>16<i class="r"></i></div>
                </div>
                <div class="body"><div></div><div></div><div></div></div>
            `;
        }
    }

    customElements.define("round-btn", RoundBtn);
    customElements.define("nav-item", NavItem);
    customElements.define("tree-row", TreeRow);
    customElements.define("tree-head", TreeHead);
    customElements.define("tree-panel", TreePanel);
    customElements.define("tab-strip", TabStrip);
    customElements.define("raid-table", RaidTable);
    customElements.define("prop-panel", PropPanel);
    customElements.define("hex-view", HexView);
    customElements.define("main-panel", MainPanel);
    customElements.define("app-header", AppHeader);
    customElements.define("app-shell", AppShell);
</script>
</body>
</html>
